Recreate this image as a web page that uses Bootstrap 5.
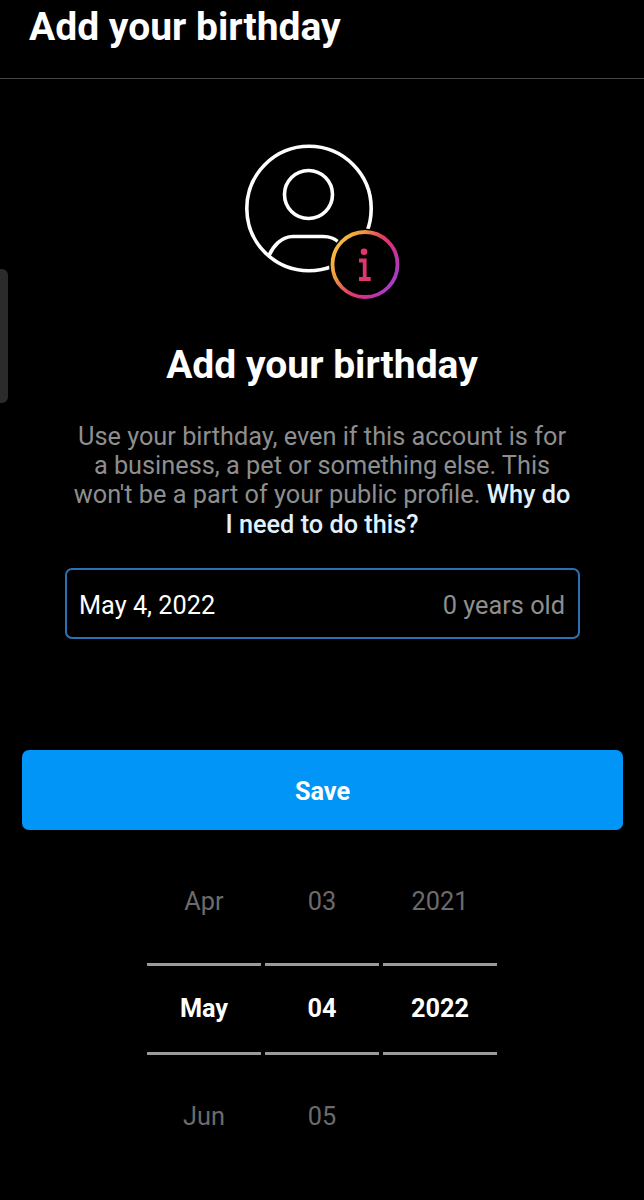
<!DOCTYPE html>
<html lang="en">
<head>
<meta charset="utf-8">
<title>Add your birthday</title>
<link href="https://cdn.jsdelivr.net/npm/bootstrap@5.3.0/dist/css/bootstrap.min.css" rel="stylesheet">
<style>
html,body{background:#000;}
body{font-family:Roboto,"Liberation Sans",sans-serif;color:#fff;width:644px;height:1200px;overflow:hidden;position:relative;}
.edge-tab{position:absolute;left:0;top:269px;width:8px;height:134px;background:#2b2b2b;border-radius:0 6px 6px 0;}
.top-bar{height:79px;border-bottom:1px solid #444;padding:0 29px 26px;}
.top-title{font-size:39px;font-weight:700;line-height:54px;margin:0;}
.avatar-art{margin:65px 0 0 244px;width:160px;height:160px;display:block;}
.main-title{font-size:39px;font-weight:700;line-height:46px;text-align:center;margin:38px 0 0;}
.blurb{font-size:25.300px;line-height:29.200px;color:#8e8e8e;text-align:center;width:498px;margin:34px 0 0 73px;}
.blurb a{color:#e0f1ff;text-decoration:none;font-weight:500;}
.date-box{width:515px;height:71px;margin:29px 0 0 65px;border:2px solid #2a72b5;border-radius:7px;padding:5px 13px 0 12px;font-size:25.300px;}
.date-age{color:#8e8e8e;}
.save-btn{display:block;width:601px;height:80px;margin:111px 0 0 22px;padding-top:10px;background:#0095f6;border:0;border-radius:7px;color:#fff;font-size:25.300px;font-weight:700;}
.save-btn:hover{background:#0095f6;color:#fff;}
.wheel{width:350px;margin:29px 0 0 147px;column-gap:4px;display:grid;grid-template-columns:repeat(3,1fr);}
.wheel-cell{height:84px;text-align:center;font-size:25.300px;line-height:86px;color:#6b6b6b;white-space:nowrap;}
.wheel-cell.current{height:92px;line-height:86px;color:#fff;font-weight:700;border-top:3px solid #9a9a9a;border-bottom:3px solid #9a9a9a;margin-top:20px;margin-bottom:19px;}
</style>
</head>
<body>
<div class="edge-tab"></div>
<header class="top-bar d-flex align-items-start"><h1 class="top-title">Add your birthday</h1></header>
<svg class="avatar-art" viewBox="0 0 160 160" aria-hidden="true">
  <defs>
    <linearGradient id="ig" x1="0" y1="0.2" x2="1" y2="0.8">
      <stop offset="0" stop-color="#f9c43f"/>
      <stop offset=".25" stop-color="#f09a3e"/>
      <stop offset=".5" stop-color="#e5405f"/>
      <stop offset=".72" stop-color="#d1308f"/>
      <stop offset="1" stop-color="#9a40d4"/>
    </linearGradient>
  </defs>
  <g fill="none" stroke="#fff" stroke-width="3.6">
    <circle cx="65" cy="64.500" r="62.200"/>
    <circle cx="64.500" cy="50.500" r="24"/>
    <path d="M25 111.500c4-9 12-19 24-19h30c6 0 12 2 16 6"/>
  </g>
  <circle cx="121" cy="120.500" r="36" fill="#000"/>
  <circle cx="121" cy="120.500" r="32.500" fill="none" stroke="url(#ig)" stroke-width="3.800"/>
  <circle cx="120" cy="107.700" r="3.300" fill="#e0356f"/>
  <path d="M115 116.500h5.700V135M115 135h11.700" fill="none" stroke="#e0356f" stroke-width="3.800"/>
</svg>
<h2 class="main-title">Add your birthday</h2>
<p class="blurb">Use your birthday, even if this account is for a business, a pet or something else. This won't be a part of your public profile. <a href="#">Why do I need to do this?</a></p>
<div class="date-box d-flex align-items-center justify-content-between"><span>May 4, 2022</span><span class="date-age">0 years old</span></div>
<button type="button" class="btn save-btn">Save</button>
<div class="wheel">
  <div class="wheel-cell">Apr</div><div class="wheel-cell">03</div><div class="wheel-cell">2021</div>
  <div class="wheel-cell current">May</div><div class="wheel-cell current">04</div><div class="wheel-cell current">2022</div>
  <div class="wheel-cell">Jun</div><div class="wheel-cell">05</div><div class="wheel-cell"></div>
</div>
<script src="https://cdn.jsdelivr.net/npm/bootstrap@5.3.0/dist/js/bootstrap.bundle.min.js"></script>
</body>
</html>
